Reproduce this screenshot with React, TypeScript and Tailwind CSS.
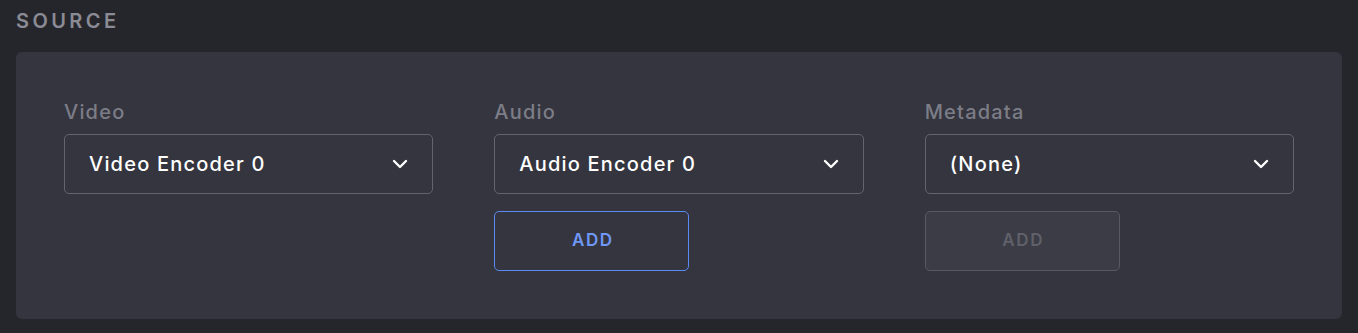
import React from "react";

type SelectProps = { value: string };

function Chevron() {
  return (
    <svg width="16" height="10" viewBox="0 0 16 10" fill="none" className="shrink-0">
      <path d="M2 2l6 6 6-6" stroke="#ffffff" strokeWidth="2.4" strokeLinecap="round" strokeLinejoin="round" />
    </svg>
  );
}

function SelectBox({ value }: SelectProps) {
  return (
    <div className="flex h-[60px] items-center justify-between rounded-[5px] border border-[#63646d] pl-6 pr-[24px]">
      <span className="text-[20px] font-medium tracking-[1.2px] text-white">{value}</span>
      <Chevron />
    </div>
  );
}

function Field({
  label,
  value,
  add,
}: {
  label: string;
  value: string;
  add?: "active" | "disabled";
}) {
  return (
    <div className="flex flex-col">
      <div className="mb-[10px] h-6 text-[20px] font-medium leading-6 tracking-[1.2px] text-[#7c7d87]">
        {label}
      </div>
      <SelectBox value={value} />
      {add === "active" && (
        <button
          type="button"
          className="mt-[17px] h-[60px] w-[195px] rounded-[5px] border border-[#5b8af0] pl-[2px] text-[17px] font-semibold tracking-[1.6px] text-[#6f98f6]"
        >
          ADD
        </button>
      )}
      {add === "disabled" && (
        <button
          type="button"
          disabled
          className="mt-[17px] h-[60px] w-[195px] rounded-[5px] border border-[#585961] bg-[#3b3c45] pl-[2px] text-[17px] font-semibold tracking-[1.6px] text-[#5f6069]"
        >
          ADD
        </button>
      )}
    </div>
  );
}

export default function App() {
  return (
    <div
      className="h-[333px] w-full bg-[#25262b] px-4 pt-[9px]"
      style={{ fontFamily: "Inter, 'Noto Sans', sans-serif" }}
    >
      <h2 className="h-[24px] text-[20px] font-semibold leading-[24px] tracking-[3.4px] text-[#8a8b95]">
        SOURCE
      </h2>
      <div className="mt-[19px] grid grid-cols-3 gap-x-[61px] rounded-[6px] bg-[#34353e] px-12 pt-[48px] pb-[48px]">
        <Field label="Video" value="Video Encoder 0" />
        <Field label="Audio" value="Audio Encoder 0" add="active" />
        <Field label="Metadata" value="(None)" add="disabled" />
      </div>
    </div>
  );
}
